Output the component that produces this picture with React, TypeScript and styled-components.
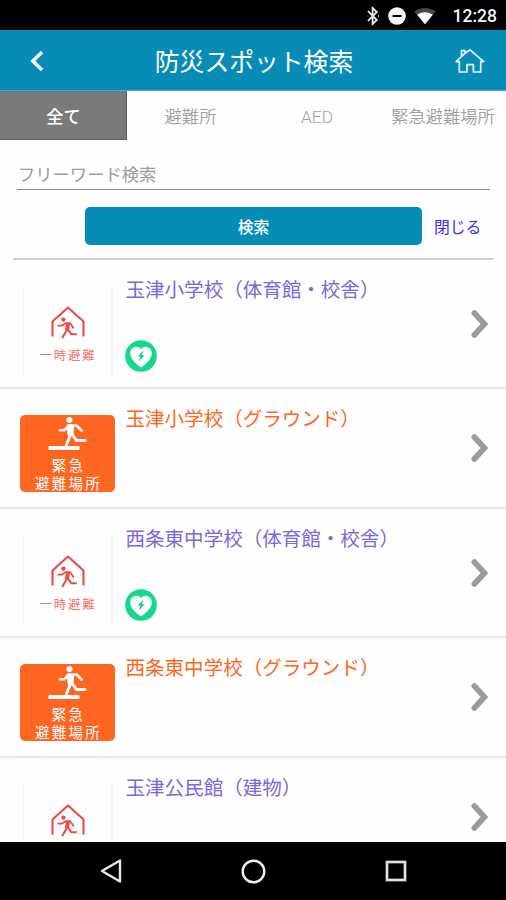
import React from "react";
import styled, { createGlobalStyle } from "styled-components";

const BLUE = "#078cb6";
const PURPLE = "#7b68d8";
const ORANGE = "#ff6622";

const GlobalStyle = createGlobalStyle`
  *, *::before, *::after { box-sizing: border-box; }
  body {
    margin: 0;
    background: #fff;
    font-family: Roboto, "Noto Sans CJK JP", sans-serif;
    overflow: hidden;
  }
  svg { display: block; flex: none; }
`;

const Screen = styled.div`
  width: 506px;
  height: 900px;
  display: flex;
  flex-direction: column;
  background: #fefefe;
  overflow: hidden;
`;

const StatusBar = styled.div`
  flex: none;
  height: 30px;
  padding: 2px 9px 0 0;
  display: flex;
  align-items: center;
  justify-content: flex-end;
  background: #000;
  color: #f4f4f4;
`;

const StatusIcons = styled.div`
  display: flex;
  align-items: center;
  gap: 8px;
`;

const Clock = styled.span`
  margin-left: 17px;
  font-size: 17.5px;
  line-height: 20px;
  font-weight: 500;
`;

const Header = styled.header`
  flex: none;
  height: 60.5px;
  padding: 2px 21px 0 30px;
  display: flex;
  align-items: center;
  justify-content: space-between;
  background: ${BLUE};
  border-bottom: 1px solid #4fa9c9;
`;

const Title = styled.h1`
  margin: 0 0 0 9px;
  padding-top: 4px;
  color: #fff;
  font-size: 24.8px;
  line-height: 36px;
  font-weight: 400;
`;

const IconButton = styled.button`
  padding: 0;
  border: 0;
  background: none;
`;

const Tabs = styled.nav`
  flex: none;
  height: 49.5px;
  display: grid;
  grid-template-columns: 127px 127px 126px 126px;
`;

const Tab = styled.button<{ $active?: boolean }>`
  padding: 3px 0 0;
  border: 0;
  font-family: inherit;
  font-size: 17.3px;
  font-weight: ${(p) => (p.$active ? 500 : 350)};
  line-height: 24px;
  white-space: nowrap;
  color: ${(p) => (p.$active ? "#fff" : "#a0a0a0")};
  background: ${(p) => (p.$active ? "#7a7a7a" : "transparent")};
  ${(p) => p.$active && "box-shadow: inset -1px -1px 0 #5c5c5c;"}
`;

const SearchPanel = styled.form`
  flex: none;
  height: 120px;
  margin: 0 12px 0 13px;
  padding: 18px 4px 0;
  border-bottom: 2px solid #cfcfcf;
`;

const SearchInput = styled.input`
  display: block;
  width: 473px;
  height: 32px;
  padding: 2px 0 0 1px;
  border: 0;
  border-bottom: 1.5px solid #8c8c8c;
  border-radius: 0;
  background: transparent;
  font-family: inherit;
  font-size: 17.3px;
  outline: 0;
  &::placeholder { color: #9c9c9c; opacity: 1; }
`;

const SearchActions = styled.div`
  display: flex;
  align-items: center;
  gap: 12px;
  margin: 17px 0 0 68px;
`;

const SearchButton = styled.button`
  width: 337px;
  height: 38px;
  padding: 0;
  border: 0;
  border-radius: 5px;
  background: ${BLUE};
  color: #fff;
  font-family: inherit;
  font-size: 15.8px;
  font-weight: 500;
`;

const CloseLink = styled.a`
  padding-top: 3px;
  color: #3a2ee6;
  font-size: 15.8px;
  line-height: 24px;
`;

const List = styled.ul`
  flex: 1;
  min-height: 0;
  margin: 0;
  padding: 0;
  list-style: none;
  overflow: hidden;
`;

const Row = styled.li<{ $tall: boolean }>`
  height: ${(p) => (p.$tall ? 129.25 : 119.75)}px;
  padding: 0 17px 0 20px;
  display: grid;
  grid-template-columns: 95px 1fr 18px;
  column-gap: 10.5px;
  border-bottom: 2px solid #e9e9e9;
`;

const ShelterCard = styled.div`
  width: 90px;
  height: 88px;
  margin: 26px 0 0 3px;
  padding-top: 20px;
  display: flex;
  flex-direction: column;
  align-items: center;
  border: solid #f3f3f3;
  border-width: 0 2px 0 1px;
`;

const ShelterLabel = styled.span`
  margin-top: 6px;
  padding-left: 1px;
  color: #f4716d;
  font-size: 12.5px;
  line-height: 20px;
  letter-spacing: 1.7px;
  white-space: nowrap;
`;

const EmergencyCard = styled.div`
  width: 95px;
  height: 77px;
  margin-top: 25.5px;
  display: flex;
  flex-direction: column;
  align-items: center;
  border-radius: 5px;
  background: ${ORANGE};
  overflow: hidden;
`;

const EmergencyLabel = styled.span`
  color: #fff;
  margin-top: 7.5px;
  padding-left: 2px;
  font-size: 14.5px;
  line-height: 17.5px;
  letter-spacing: 2.3px;
  text-align: center;
  white-space: nowrap;
`;

const Details = styled.div`
  display: flex;
  flex-direction: column;
  align-items: flex-start;
  padding-top: 17px;
`;

const Name = styled.span<{ $orange: boolean }>`
  color: ${(p) => (p.$orange ? ORANGE : PURPLE)};
  font-size: 19.55px;
  line-height: 28px;
  white-space: nowrap;
`;

const Badge = styled.div`
  margin: 34.5px 0 0 -0.5px;
`;

const ChevronCell = styled.div`
  display: flex;
  align-items: center;
`;

const NavBar = styled.footer`
  flex: none;
  height: 58.5px;
  padding-top: 1px;
  display: flex;
  align-items: center;
  justify-content: center;
  gap: 119px;
  background: #000;
`;

const Bluetooth = () => (
  <svg width="14" height="20" viewBox="0 0 14 20" fill="none" stroke="#e8e8e8" strokeWidth="1.8">
    <path d="M2 5.2 10.8 14 6.6 18V2l4.2 4L2 14.8" />
    <path d="M1.4 10h.1M12 10h.8" strokeWidth="2" />
  </svg>
);

const DoNotDisturb = () => (
  <svg width="18" height="18" viewBox="0 0 18 18">
    <circle cx="9" cy="9" r="8.8" fill="#f6f6f6" />
    <path d="M4.5 9h9" stroke="#000" strokeWidth="2" />
  </svg>
);

const Wifi = () => (
  <svg width="22" height="18" viewBox="0 0 22 18">
    <path d="M.4 4.6C6.5-.2 15.5-.2 21.6 4.600L11 17.2Z" fill="#484848" />
    <path d="M3.2 7.8C7.7 4.3 14.3 4.3 18.8 7.8L11 17.2Z" fill="#fff" />
  </svg>
);

const BackIcon = () => (
  <svg width="14" height="20" viewBox="0 0 14 20" fill="none" stroke="#fff" strokeWidth="3.4">
    <path d="M12 1 2.8 10 12 19" />
  </svg>
);

const HomeIcon = () => (
  <svg width="30" height="24" viewBox="0 0 30 24" fill="none" stroke="#e4f7fd" strokeWidth="1.7" strokeLinejoin="round">
    <path d="M4.3 12.6H1.2L6.5 7.5V1.7H10V4.2L15 .9 28.7 12.6H25.7V23H18.4V15.7H12V23H4.3Z" />
    <path d="M6.5 7.5 10 4.2" />
  </svg>
);

const ShelterIcon = () => (
  <svg width="34" height="34" viewBox="0 0 34 34" fill="none" stroke="#ee4848" strokeLinejoin="round">
    <path d="M1.5 30.5V15.5L17 1.5 32.5 15.5V30.5" strokeWidth="2.1" />
    <circle cx="12.4" cy="13.6" r="2.2" fill="#ee4848" stroke="none" />
    <path d="M17 18 15.8 24.500" strokeWidth="4" />
    <path d="M6.5 19.7H10.800L14.500 17.2H19.200L22.800 22.500" strokeWidth="1.7" />
    <path d="M15.500 24.500 11.200 32M16.800 23.500 20.500 28.300H25.800" strokeWidth="2.1" />
  </svg>
);

const RunnerIcon = () => (
  <svg width="40" height="36" viewBox="0 0 40 36" fill="none" stroke="#fff" strokeLinecap="round" strokeLinejoin="round">
    <circle cx="21.5" cy="5" r="3" fill="#fff" stroke="none" />
    <path d="M19.500 10 25.500 10.500 25 19 21 21.500 20 18.500Z" fill="#fff" strokeWidth="1.2" />
    <path d="M12 15.3H16.500L20.500 10.5 28.500 10.500 33.500 15.500" strokeWidth="2.5" />
    <path d="M22.500 20 18.500 29.500M23.500 18.500 28.500 25.500H37" strokeWidth="3" />
    <rect x=".5" y="31" width="31" height="4" rx="1" fill="#fff" stroke="none" />
  </svg>
);

const AedIcon = () => (
  <svg width="32" height="32" viewBox="0 0 32 32">
    <circle cx="16" cy="16" r="15.8" fill="#15d98a" />
    <path d="M16 27.5C10.5 23.5 5.2 19 5.2 13.2 5.2 6.7 12.7 4.8 16 9.2 19.3 4.8 26.8 6.7 26.8 13.2 26.8 19 21.5 23.5 16 27.5Z" fill="#fff" />
    <path d="M18.6 10.500 12.8 16.600H15.600L13.500 21.800 19.600 15.300H16.800Z" fill="#12c981" />
  </svg>
);

const Chevron = () => (
  <svg width="18" height="30" viewBox="0 0 18 30" fill="none" stroke="#9b9b9b" strokeWidth="5.6" strokeLinecap="round">
    <path d="M3.3 4 13.5 15 3.3 26" />
  </svg>
);

const BackKey = () => (
  <svg width="22" height="24" viewBox="0 0 22 24" fill="none" stroke="#e8e8e8" strokeWidth="2.4" strokeLinejoin="round">
    <path d="M20 1.5V22.5L2 12Z" />
  </svg>
);

const HomeKey = () => (
  <svg width="25" height="25" viewBox="0 0 25 25" fill="none" stroke="#f0f0f0" strokeWidth="2.4">
    <circle cx="12.5" cy="12.5" r="10.8" />
  </svg>
);

const RecentsKey = () => (
  <svg width="22" height="22" viewBox="0 0 22 22" fill="none" stroke="#e0e0e0" strokeWidth="2.7">
    <rect x="2" y="2" width="18" height="18" />
  </svg>
);

type Spot = { name: string; kind: "shelter" | "emergency"; aed?: boolean };

const spots: Spot[] = [
  { name: "玉津小学校（体育館・校舎）", kind: "shelter", aed: true },
  { name: "玉津小学校（グラウンド）", kind: "emergency" },
  { name: "西条東中学校（体育館・校舎）", kind: "shelter", aed: true },
  { name: "西条東中学校（グラウンド）", kind: "emergency" },
  { name: "玉津公民館（建物）", kind: "shelter" },
];

const SpotRow = ({ spot, labelled }: { spot: Spot; labelled: boolean }) => (
  <Row $tall={!!spot.aed}>
    {spot.kind === "shelter" ? (
      <ShelterCard>
        <ShelterIcon />
        {labelled && <ShelterLabel>一時避難</ShelterLabel>}
      </ShelterCard>
    ) : (
      <EmergencyCard>
        <RunnerIcon />
        <EmergencyLabel>
          緊急
          <br />
          避難場所
        </EmergencyLabel>
      </EmergencyCard>
    )}
    <Details>
      <Name $orange={spot.kind === "emergency"}>{spot.name}</Name>
      {spot.aed && (
        <Badge>
          <AedIcon />
        </Badge>
      )}
    </Details>
    <ChevronCell>
      <Chevron />
    </ChevronCell>
  </Row>
);

export default function App() {
  return (
    <>
      <GlobalStyle />
      <Screen>
        <StatusBar>
          <StatusIcons>
            <Bluetooth />
            <DoNotDisturb />
            <Wifi />
          </StatusIcons>
          <Clock>12:28</Clock>
        </StatusBar>
        <Header>
          <IconButton aria-label="戻る">
            <BackIcon />
          </IconButton>
          <Title>防災スポット検索</Title>
          <IconButton aria-label="ホーム">
            <HomeIcon />
          </IconButton>
        </Header>
        <Tabs>
          <Tab $active>全て</Tab>
          <Tab>避難所</Tab>
          <Tab>AED</Tab>
          <Tab>緊急避難場所</Tab>
        </Tabs>
        <SearchPanel onSubmit={(e) => e.preventDefault()}>
          <SearchInput placeholder="フリーワード検索" />
          <SearchActions>
            <SearchButton>検索</SearchButton>
            <CloseLink>閉じる</CloseLink>
          </SearchActions>
        </SearchPanel>
        <List>
          {spots.map((spot, i) => (
            <SpotRow key={spot.name} spot={spot} labelled={i < spots.length - 1} />
          ))}
        </List>
        <NavBar>
          <BackKey />
          <HomeKey />
          <RecentsKey />
        </NavBar>
      </Screen>
    </>
  );
}
